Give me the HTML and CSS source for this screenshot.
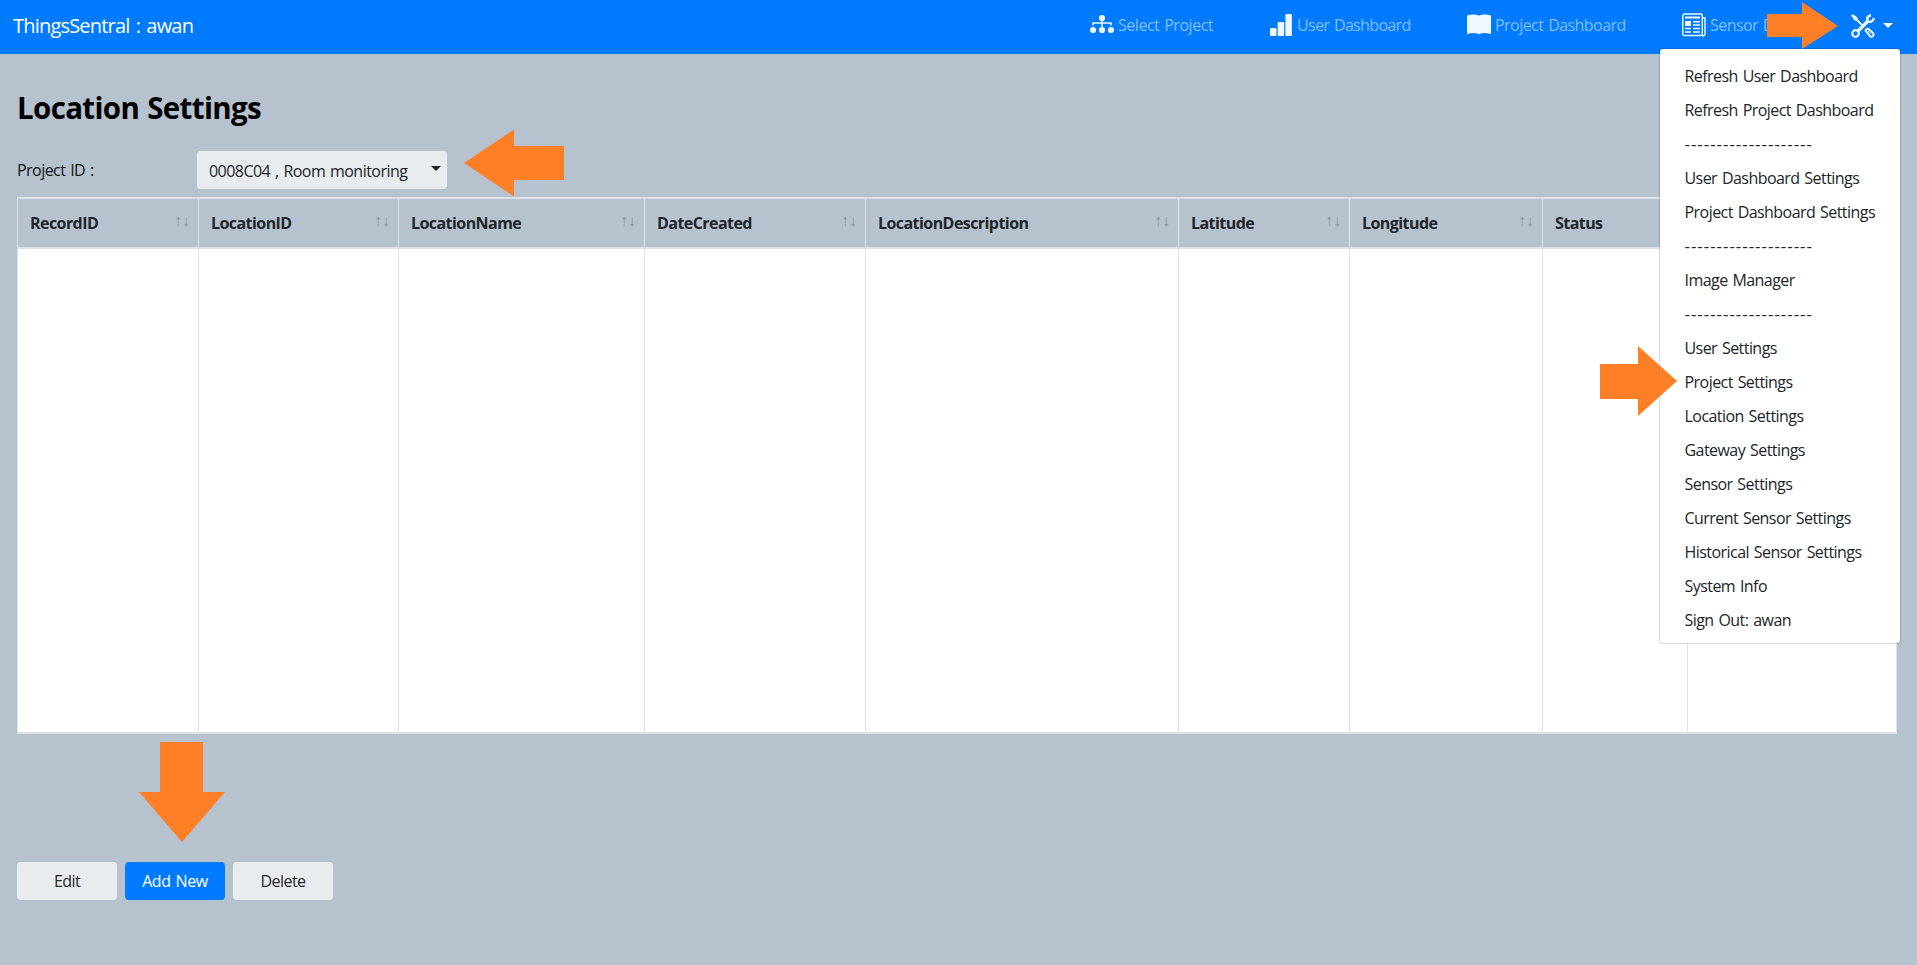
FILE: index.html
```
<!DOCTYPE html>
<html lang="en">
<head>
<meta charset="utf-8">
<title>ThingsSentral</title>
<link rel="stylesheet" href="styles.css">
</head>
<body>
<nav class="navbar">
  <a class="brand">ThingsSentral : awan</a>
  <div class="nav-links">
    <a class="nav-item nav-project"><svg class="icon" viewBox="0 0 24 24"><g fill="#eff7ff"><circle cx="12" cy="5" r="3.1"/><circle cx="3" cy="17" r="3.1"/><circle cx="12" cy="17" r="3.1"/><circle cx="21" cy="17" r="3.1"/></g><path d="M12 7v7M3 12.500v-2.500h18v2.500" fill="none" stroke="#eff7ff" stroke-width="1.5"/></svg><span>Select Project</span></a>
    <a class="nav-item nav-user"><svg class="icon" viewBox="0 0 24 24"><g fill="#eff7ff"><rect x="0" y="15" width="6.500" height="8" rx="1.200"/><rect x="7.700" y="9" width="6.500" height="14" rx="1.200"/><rect x="15.400" y="1" width="6.500" height="22" rx="1.200"/></g></svg><span>User Dashboard</span></a>
    <a class="nav-item nav-board"><svg class="icon" viewBox="0 0 24 24"><path d="M0 2.500Q6 .5 12 2.500Q18 .5 24 2.500V21Q17 19.500 13.500 20.500Q12 22 10.500 20.500Q7 19.500 0 21Z" fill="#eff7ff"/></svg><span>Project Dashboard</span></a>
    <a class="nav-item nav-sensor"><svg class="icon" viewBox="0 0 24 24"><g fill="none" stroke="#eff7ff" stroke-width="1.400"><rect x=".8" y="1" width="19.500" height="21.500" rx="1.500"/><path d="M20 5h3v16q0 2-3 2"/><path d="M3 4.500h15" stroke-width="2"/><path d="M3 8.800h6M11 8.800h7M11 12h7M3 15.500h6M11 15.500h7M3 19h6M11 19h7"/></g><rect x="3" y="8" width="6" height="5" fill="#eff7ff"/></svg><span>Sensor D</span></a>
  </div>
  <a class="tools"><svg class="icon" viewBox="0 0 24 24"><path d="M.5 1.500L1.500.5L6 3.500L6.500 5.500L13.500 12.500L12.500 13.500L5.500 6.500L3.500 6Z" fill="#eff7ff" stroke="#eff7ff" stroke-width=".8"/><g fill="none" stroke="#eff7ff"><path d="M7 17L17 7" stroke-width="3.200"/><circle cx="4.500" cy="19.500" r="3.300" stroke-width="2.200"/><path d="M20 1.200Q15.800 2 16.200 6L18 7.800Q22 8.200 22.800 4" stroke-width="2.400"/><path d="M14.500 16.500q.8-2 2.500-1.800l5.200 4.500q1 1.800-.5 3t-2.500.2z" stroke-width="1.900"/><path d="M17 17l3 3" stroke-width="1"/></g></svg><i class="caret"></i></a>
  <div class="menu">
    <a>Refresh User Dashboard</a>
    <a>Refresh Project Dashboard</a>
    <a class="rule">--------------------</a>
    <a>User Dashboard Settings</a>
    <a>Project Dashboard Settings</a>
    <a class="rule">--------------------</a>
    <a>Image Manager</a>
    <a class="rule">--------------------</a>
    <a>User Settings</a>
    <a>Project Settings</a>
    <a>Location Settings</a>
    <a>Gateway Settings</a>
    <a>Sensor Settings</a>
    <a>Current Sensor Settings</a>
    <a>Historical Sensor Settings</a>
    <a>System Info</a>
    <a>Sign Out: awan</a>
  </div>
</nav>
<main class="page">
  <h1>Location Settings</h1>
  <div class="filter"><label>Project ID :</label><button class="select"><span>0008C04 , Room monitoring</span><i class="caret"></i></button></div>
  <div class="grid">
    <div class="col"><div class="th"><b>RecordID</b><i class="sort">↑↓</i></div></div>
    <div class="col"><div class="th"><b>LocationID</b><i class="sort">↑↓</i></div></div>
    <div class="col"><div class="th"><b>LocationName</b><i class="sort">↑↓</i></div></div>
    <div class="col"><div class="th"><b>DateCreated</b><i class="sort">↑↓</i></div></div>
    <div class="col"><div class="th"><b>LocationDescription</b><i class="sort">↑↓</i></div></div>
    <div class="col"><div class="th"><b>Latitude</b><i class="sort">↑↓</i></div></div>
    <div class="col"><div class="th"><b>Longitude</b><i class="sort">↑↓</i></div></div>
    <div class="col"><div class="th"><b>Status</b></div></div>
    <div class="col"><div class="th"></div></div>
  </div>
  <div class="actions"><button class="btn">Edit</button><button class="btn primary">Add New</button><button class="btn">Delete</button></div>
</main>
<svg class="arrows" viewBox="0 0 1917 965"><g fill="#ff7f27">
  <path d="M464 163L514 129.500V146H564V180H514V196.500Z"/>
  <path d="M1767 14H1802V2L1838 26L1802 49V37H1767Z"/>
  <path d="M1600 364H1638V346L1677 381L1638 416V399H1600Z"/>
  <path d="M160 742H203V792H225L182 842L139 792H160Z"/>
</g></svg>
</body>
</html>
```
FILE: styles.css
```
* { box-sizing: border-box; }
body { margin: 0; height: 965px; overflow: hidden; position: relative; background: #b6c2ce; color: #212529; font: 16px/24px "Open Sans", "Noto Sans", sans-serif; letter-spacing: -.55px; word-spacing: 1.2px; }
.navbar { position: relative; height: 54px; background: #007bff; display: flex; align-items: center; padding-left: 13px; }
.brand { color: #fff; font-size: 20px; letter-spacing: -.8px; word-spacing: 1.8px; white-space: nowrap; width: 1077px; padding-bottom: 2px; }
.nav-links { display: flex; flex: none; }
.nav-item { display: flex; align-items: center; gap: 4px; color: #80bdff; white-space: nowrap; padding-bottom: 4px; }
.nav-project { width: 180px; letter-spacing: -.47px; }
.nav-user { width: 197px; gap: 3px; letter-spacing: -.65px; }
.nav-board { width: 215px; }
.nav-sensor { width: 169px; }
.icon { width: 24px; height: 24px; flex: none; display: block; }
.tools { display: flex; align-items: center; gap: 8px; padding-bottom: 3px; color: #fff; }
.caret { width: 0; height: 0; border: 5px solid transparent; border-top-color: currentColor; border-bottom: 0; }
.menu { position: absolute; z-index: 2; left: 1659px; top: 48px; width: 242px; height: 596px; padding: 10px 0 8px; background: #fff; background-clip: padding-box; border: 1px solid rgba(0,0,0,.15); border-radius: 4px; }
.menu a { display: block; height: 34px; line-height: 34px; padding-left: 24.5px; white-space: nowrap; }
.menu .rule { font-size: 17px; letter-spacing: .95px; }
.page { padding: 35px 20px 0 17px; }
h1 { margin: 0; height: 62px; font-size: 29.5px; line-height: 38px; letter-spacing: -.65px; word-spacing: 1px; color: #000; }
.filter { display: flex; height: 46px; color: #111; }
.filter label { width: 180px; padding-top: 7px; }
.select, .btn { border: 0; border-radius: 4px; background: #e9ecef; color: #212529; font: inherit; letter-spacing: inherit; word-spacing: inherit; height: 38px; }
.select { width: 250px; padding: 2px 6px 0 12px; display: flex; align-items: center; justify-content: space-between; white-space: nowrap; letter-spacing: -.54px; }
.select .caret { margin-top: -5px; }
.grid { display: grid; grid-template-columns: 181px 200px 246px 221px 313px 171px 193px 145px 210px; height: 537px; border: solid #dee2e6; border-width: 2px 1px 2px 0; background: #fff; }
.col { border-left: 1px solid #dee2e6; }
.th { height: 50px; padding: 0 8px 1px 12px; background: #b6c2ce; border-bottom: 2px solid #dee2e6; display: flex; justify-content: space-between; align-items: center; }
.th b { letter-spacing: -.56px; font-size: 16px; }
.sort { font: 16px/20px "Liberation Sans", sans-serif; letter-spacing: 0; padding-bottom: 4px; color: #8995a1; }
.actions { display: flex; gap: 8px; margin-top: 128px; }
.btn { width: 100px; padding: 0; }
.primary { background: #007bff; color: #fff; letter-spacing: -.4px; }
.arrows { position: absolute; z-index: 3; left: 0; top: 0; width: 1917px; height: 965px; pointer-events: none; }
```
